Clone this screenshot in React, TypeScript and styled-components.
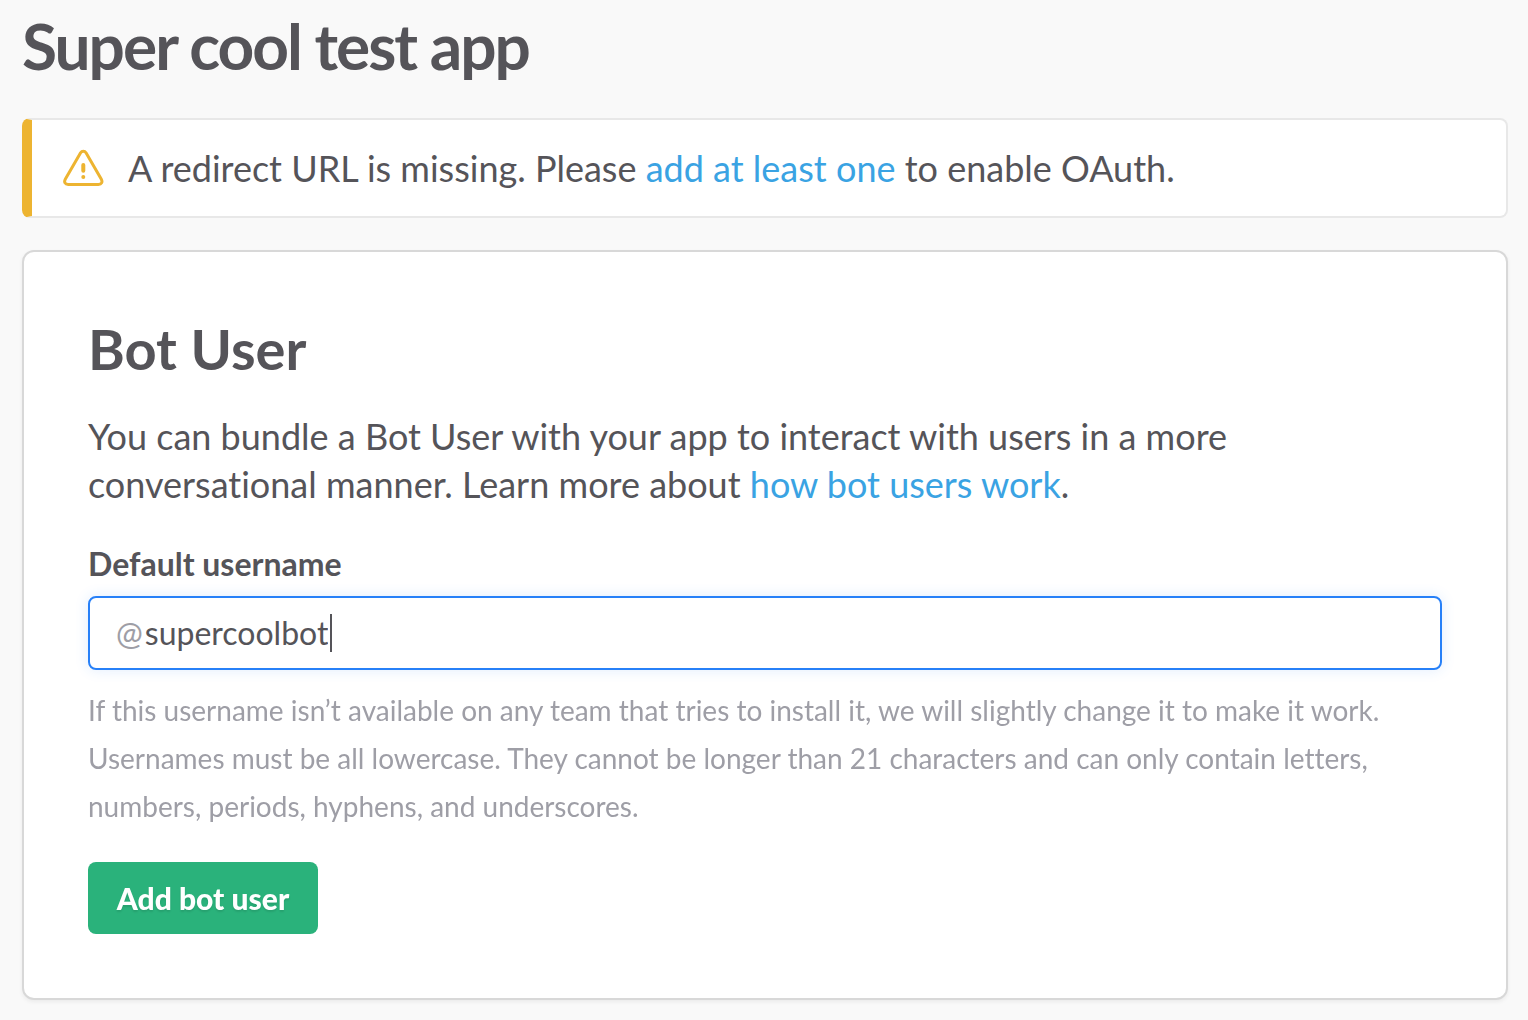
import React, { useState } from "react";
import styled, { createGlobalStyle } from "styled-components";

const GlobalStyle = createGlobalStyle`
  *, *::before, *::after { box-sizing: border-box; }
  body {
    margin: 0;
    background: #f9f9f9;
    color: #555459;
    font-family: Lato, "Liberation Sans", sans-serif;
    font-size: 36px;
    line-height: 48px;
    font-variant-ligatures: none;
  }
`;

const Page = styled.main`
  padding: 10px 20px 20px 22px;
`;

const PageTitle = styled.h1`
  margin: 0 0 36px;
  font-size: 64px;
  line-height: 72px;
  font-weight: 700;
  letter-spacing: -2px;
`;

const Alert = styled.div`
  display: flex;
  align-items: center;
  gap: 24px;
  margin-bottom: 32px;
  padding: 24px 30px;
  background: #fff;
  border: 2px solid #e8e8e8;
  border-left: 10px solid #edb431;
  border-radius: 8px;
`;

const WarningIcon = styled.svg`
  flex: none;
  width: 42px;
  height: 40px;
`;

const AlertText = styled.p`
  margin: 0;
`;

const Link = styled.a`
  color: #3aa3e3;
  text-decoration: none;
  &:hover { text-decoration: underline; }
`;

const Card = styled.section`
  padding: 64px;
  background: #fff;
  border: 2px solid #d8d8d8;
  border-radius: 12px;
  box-shadow: 0 2px 4px rgba(0, 0, 0, 0.06);
`;

const CardTitle = styled.h2`
  margin: 0 0 30px;
  font-size: 56px;
  line-height: 66px;
  font-weight: 700;
`;

const Intro = styled.p`
  max-width: 1200px;
  margin: 0 0 32px;
`;

const Label = styled.label`
  display: block;
  margin-bottom: 8px;
  font-size: 32px;
  line-height: 48px;
  font-weight: 700;
`;

const Field = styled.div`
  display: flex;
  align-items: center;
  height: 74px;
  padding: 0 26px;
  background: #fff;
  border: 2px solid #2780f8;
  border-radius: 8px;
  box-shadow: 0 0 14px rgba(39, 128, 248, 0.14);
  font-size: 32px;
`;

const Prefix = styled.span`
  margin-right: 2px;
  color: #9e9ea6;
`;

const UsernameInput = styled.input`
  field-sizing: content;
  min-width: 2px;
  max-width: 100%;
  height: 48px;
  padding: 0;
  border: 0;
  outline: 0;
  background: transparent;
  color: inherit;
  caret-color: transparent;
  font: inherit;
`;

const Caret = styled.span`
  flex: none;
  width: 2px;
  height: 38px;
  margin-left: 2px;
  background: #555459;
`;

const Hint = styled.p`
  margin: 16px 0 32px;
  color: #9e9ea6;
  font-size: 28px;
`;

const SubmitButton = styled.button`
  min-width: 230px;
  height: 72px;
  padding: 0 24px;
  border: 0;
  border-radius: 8px;
  background: #2ab27b;
  color: #fff;
  font: 900 30px/40px Lato, "Liberation Sans", sans-serif;
  text-shadow: 0 2px 2px rgba(0, 0, 0, 0.1);
  cursor: pointer;
`;

export default function App() {
  const [username, setUsername] = useState("supercoolbot");
  return (
    <>
      <GlobalStyle />
      <Page>
        <PageTitle>Super cool test app</PageTitle>
        <Alert role="alert">
          <WarningIcon viewBox="0 0 42 40" fill="none" stroke="#edb431" strokeWidth="3" strokeLinejoin="round" strokeLinecap="round" aria-hidden="true">
            <path d="M18.600 4.700 3.400 31C1.700 34 3 36.500 6.200 36.500H36.400C39.600 36.500 40.900 34 39.200 31L24 4.700C22.700 2.700 19.900 2.700 18.600 4.700Z" />
            <path d="M21.300 17V22.800M21.300 28.900V29" strokeWidth="4" />
          </WarningIcon>
          <AlertText>
            A redirect URL is missing. Please <Link href="#redirects">add at least one</Link> to enable OAuth.
          </AlertText>
        </Alert>
        <Card>
          <CardTitle>Bot User</CardTitle>
          <Intro>
            You can bundle a Bot User with your app to interact with users in a more
            conversational manner. Learn more about <Link href="#bot-users">how bot users work</Link>.
          </Intro>
          <form onSubmit={(event) => event.preventDefault()}>
            <Label htmlFor="username">Default username</Label>
            <Field>
              <Prefix>@</Prefix>
              <UsernameInput
                id="username"
                autoFocus
                maxLength={21}
                spellCheck={false}
                value={username}
                onChange={(event) => setUsername(event.target.value)}
              />
              <Caret aria-hidden="true" />
            </Field>
            <Hint>
              If this username isn’t available on any team that tries to install it, we will slightly change it to make it work.
              Usernames must be all lowercase. They cannot be longer than 21 characters and can only contain letters,
              numbers, periods, hyphens, and underscores.
            </Hint>
            <SubmitButton type="submit">Add bot user</SubmitButton>
          </form>
        </Card>
      </Page>
    </>
  );
}
